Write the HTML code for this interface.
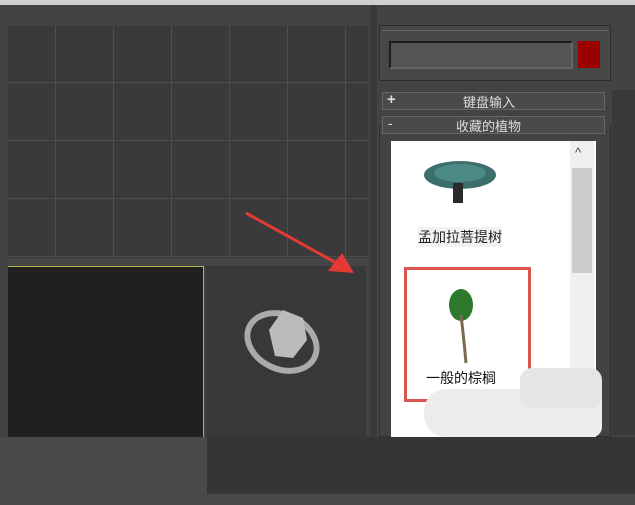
<!DOCTYPE html>
<html><head><meta charset="utf-8"><style>
body{margin:0;width:635px;height:505px;overflow:hidden;background:#444;position:relative;font-family:"Liberation Sans","Noto Sans CJK SC",sans-serif}
div{position:absolute;box-sizing:border-box}
.t{color:#ddd;font-size:13px;text-align:center}
</style></head><body>
<div style="left:0;top:0;width:635px;height:5px;background:#cfcfcf"></div>
<div style="left:0;top:5px;width:635px;height:500px;background:#434343"></div>
<div style="left:8px;top:26px;width:360px;height:232px;background:#3a3a3a;
background-image:linear-gradient(90deg,#4e4e4e 1px,transparent 1px),linear-gradient(#4e4e4e 1px,transparent 1px);
background-size:58px 58px;background-position:47px 0,0 56px"></div>
<div style="left:8px;top:258px;width:360px;height:8px;background:#454545"></div>
<div style="left:8px;top:266px;width:196px;height:172px;background:#202020;border-top:1px solid #b7b24a;border-right:1px solid #b7b24a"></div>
<div style="left:206px;top:266px;width:160px;height:172px;background:#383838"></div>
<svg style="position:absolute;left:235px;top:300px" width="100" height="85">
<ellipse cx="47" cy="42" rx="36" ry="27" transform="rotate(25 47 42)" fill="none" stroke="#aaa" stroke-width="6"/>
<polygon points="48,10 68,18 72,40 58,58 40,56 34,30" fill="#bbb"/>
</svg>
<svg style="position:absolute;left:240px;top:205px" width="120" height="75">
<line x1="6" y1="8" x2="100" y2="60" stroke="#e53935" stroke-width="3"/>
<polygon points="114,68 88,66 102,48" fill="#e53935"/>
</svg>
<div style="left:370px;top:5px;width:7px;height:432px;background:#3a3a3a"></div>
<div style="left:379px;top:25px;width:232px;height:56px;border:1px solid #2e2e2e;background:#474747"></div>
<div style="left:382px;top:26px;width:226px;height:5px;border-bottom:1px solid #666"></div>
<div style="left:389px;top:41px;width:184px;height:28px;background:#555;border:2px solid #1e1e1e;border-right-color:#666;border-bottom-color:#666"></div>
<div style="left:578px;top:41px;width:22px;height:27px;background:#9a0000"></div>
<div style="left:382px;top:92px;width:223px;height:18px;border:1px solid #666;background:#4a4a4a" class="t"><span style="position:absolute;left:4px;top:-2px;font-size:15px;font-weight:bold">+</span><span style="position:absolute;left:80px;top:-1px">键盘输入</span></div>
<div style="left:382px;top:116px;width:223px;height:18px;border:1px solid #666;background:#4a4a4a" class="t"><span style="position:absolute;left:5px;top:-2px;font-size:14px">-</span><span style="position:absolute;left:73px;top:-1px">收藏的植物</span></div>
<div style="left:379px;top:125px;width:232px;height:312px;border:1px solid #2e2e2e;border-top:none"></div>
<div style="left:391px;top:141px;width:205px;height:296px;background:#fff"></div>
<div style="left:570px;top:141px;width:24px;height:296px;background:#efefef"></div>
<div style="left:572px;top:168px;width:20px;height:105px;background:#cdcdcd"></div>
<div style="left:575px;top:145px;color:#444;font-size:13px">^</div>
<svg style="position:absolute;left:420px;top:155px" width="85" height="55">
<ellipse cx="40" cy="20" rx="36" ry="14" fill="#3c6e6c"/>
<ellipse cx="40" cy="18" rx="26" ry="9" fill="#4d8a86"/>
<rect x="33" y="28" width="10" height="20" fill="#2a2a2a"/>
</svg>
<div style="left:418px;top:227px;font-size:14px;color:#222;background:#f2f2f2">孟加拉菩提树</div>
<div style="left:404px;top:267px;width:127px;height:135px;border:3px solid #d9534f"></div>
<svg style="position:absolute;left:440px;top:285px" width="40" height="80">
<ellipse cx="21" cy="20" rx="12" ry="16" fill="#2d7a2d"/>
<path d="M21 30 Q24 55 26 78" stroke="#7a6a50" stroke-width="3" fill="none"/>
</svg>
<div style="left:426px;top:368px;font-size:14px;color:#111">一般的棕榈</div>
<div style="left:424px;top:389px;width:178px;height:48px;background:#ececec;border-radius:22px 10px 10px 22px"></div>
<div style="left:520px;top:368px;width:82px;height:40px;background:#e5e5e5;border-radius:12px"></div>
<div style="left:612px;top:90px;width:23px;height:345px;background:#3a3a3a"></div>
<div style="left:0;top:437px;width:635px;height:68px;background:#4a4a4a"></div>
<div style="left:207px;top:437px;width:428px;height:57px;background:#353535"></div>
</body></html>
